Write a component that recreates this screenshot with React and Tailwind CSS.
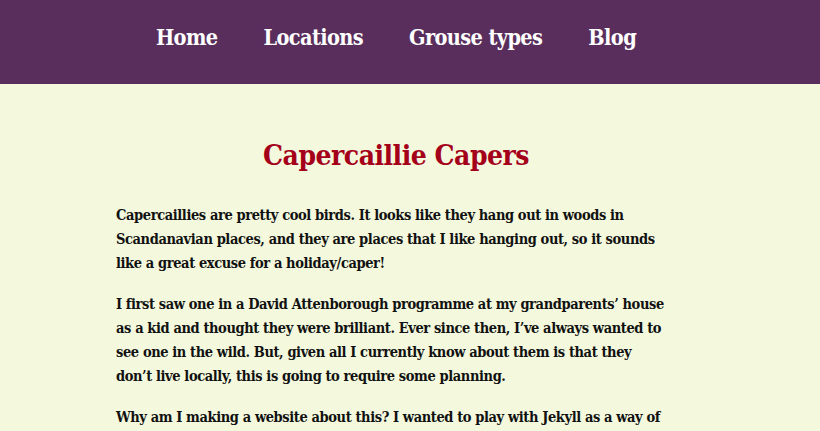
import React from 'react';

const NAV_LINKS = ['Home', 'Locations', 'Grouse types', 'Blog'];

const slab = { fontFamily: '"DejaVu Serif Condensed", "DejaVu Serif", serif' };

function App() {
  return (
    <div className="min-h-screen bg-[#f4f9de] text-[#111111]" style={slab}>
      {/* Top navigation */}
      <nav className="h-[84px] bg-[#592e5c] pr-[28px]">
        <ul className="flex h-full items-center justify-center gap-[46px] pb-[8px]">
          {NAV_LINKS.map((link) => (
            <li key={link}>
              <a href="#" className="text-[21.5px] font-bold tracking-[-0.6px] text-white">
                {link}
              </a>
            </li>
          ))}
        </ul>
      </nav>

      {/* Post */}
      <main className="pr-[28px]">
        <article className="mx-auto max-w-[560px] pt-[52px]">
          <h1 className="mb-[27px] text-center text-[28px] font-bold leading-[40px] tracking-[-0.5px] text-[#a5001a]">
            Capercaillie Capers
          </h1>
          <div className="pr-[8px]">
            <p className="mb-[17px] text-[14.5px] font-bold leading-[24px] tracking-[-0.4px]">
              Capercaillies are pretty cool birds. It looks like they hang out in woods in
              Scandanavian places, and they are places that I like hanging out, so it sounds
              like a great excuse for a holiday/caper!
            </p>
            <p className="mb-[17px] text-[14.5px] font-bold leading-[24px] tracking-[-0.4px]">
              I first saw one in a David Attenborough programme at my grandparents’ house
              as a kid and thought they were brilliant. Ever since then, I’ve always wanted to
              see one in the wild. But, given all I currently know about them is that they
              don’t live locally, this is going to require some planning.
            </p>
            <p className="mb-[17px] text-[14.5px] font-bold leading-[24px] tracking-[-0.4px]">
              Why am I making a website about this? I wanted to play with Jekyll as a way of
              making a simple site, and this seemed like a fun thing to write about.
            </p>
          </div>
        </article>
      </main>
    </div>
  );
}

export default App;
